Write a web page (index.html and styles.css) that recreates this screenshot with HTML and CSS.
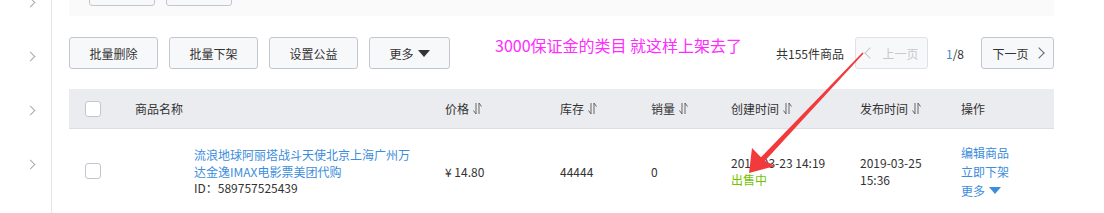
FILE: index.html
```html
<!DOCTYPE html>
<html lang="zh">
<head>
<meta charset="utf-8">
<link rel="stylesheet" href="styles.css">
</head>
<body>
<div class="page">
  <aside class="side">
    <span class="chev c0"></span>
    <span class="chev"></span>
    <span class="chev"></span>
    <span class="chev"></span>
  </aside>
  <main class="main">
    <div class="topbox">
      <span class="btn tb"></span>
      <span class="btn tb"></span>
    </div>
    <div class="toolbar">
      <div class="left">
        <span class="btn w89">批量删除</span>
        <span class="btn w89">批量下架</span>
        <span class="btn w89">设置公益</span>
        <span class="btn w80">更多 <i class="tri"></i></span>
        <span class="note">3000保证金的类目 就这样上架去了</span>
      </div>
      <div class="pager">
        <span class="total">共155件商品</span>
        <span class="btn pg disabled"><i class="lt"></i>上一页</span>
        <span class="pnum"><b>1</b>/8</span>
        <span class="btn pg">下一页<i class="gt"></i></span>
      </div>
    </div>
    <div class="table">
      <div class="row head">
        <div class="c cb"><span class="box"></span></div>
        <div class="c">商品名称</div>
        <div class="c">价格<svg class="sort" viewBox="0 0 9 13"><path d="M3 1V12L0.5 8.5M6 12V1L8.5 4.5" fill="none" stroke="#666" stroke-width="1"/></svg></div>
        <div class="c">库存<svg class="sort" viewBox="0 0 9 13"><path d="M3 1V12L0.5 8.5M6 12V1L8.5 4.5" fill="none" stroke="#666" stroke-width="1"/></svg></div>
        <div class="c">销量<svg class="sort" viewBox="0 0 9 13"><path d="M3 1V12L0.5 8.5M6 12V1L8.5 4.5" fill="none" stroke="#666" stroke-width="1"/></svg></div>
        <div class="c">创建时间<svg class="sort" viewBox="0 0 9 13"><path d="M3 1V12L0.5 8.5M6 12V1L8.5 4.5" fill="none" stroke="#666" stroke-width="1"/></svg></div>
        <div class="c">发布时间<svg class="sort" viewBox="0 0 9 13"><path d="M3 1V12L0.5 8.5M6 12V1L8.5 4.5" fill="none" stroke="#666" stroke-width="1"/></svg></div>
        <div class="c">操作</div>
      </div>
      <div class="row body">
        <div class="c cb"><span class="box"></span></div>
        <div class="c name">
          <span class="thumb"></span>
          <div class="info">
            <a class="link">流浪地球阿丽塔战斗天使北京上海广州万达金逸IMAX电影票美团代购</a>
            <div class="id">ID：589757525439</div>
          </div>
        </div>
        <div class="c">¥ 14.80</div>
        <div class="c">44444</div>
        <div class="c">0</div>
        <div class="c stack">
          <div>2019-03-23 14:19</div>
          <div class="green">出售中</div>
        </div>
        <div class="c stack">
          <div>2019-03-25</div>
          <div>15:36</div>
        </div>
        <div class="c stack ops">
          <a class="link">编辑商品</a>
          <a class="link">立即下架</a>
          <a class="link">更多 <i class="tri blue"></i></a>
        </div>
      </div>
    </div>
  </main>
</div>
<svg class="arrow" width="1104" height="213" viewBox="0 0 1104 213">
  <polygon points="862.4,52.4 863.6,53.6 765,160.8 775,166 749,173 752,148 761,157.2" fill="#f2393b"/>
</svg>
</body>
</html>
```
FILE: styles.css
```css
* { box-sizing: border-box; }
html, body { margin: 0; padding: 0; background: #fff; }
body {
  width: 1104px;
  height: 213px;
  overflow: hidden;
  position: relative;
  font-family: "Noto Sans CJK SC", "Liberation Sans", sans-serif;
  font-size: 12px;
  color: #333;
}
.page { display: flex; height: 213px; }
.side {
  width: 52px;
  flex: none;
  border-right: 1px solid #e6e6e6;
  display: flex;
  flex-direction: column;
  align-items: center;
  padding-left: 10px;
}
.chev {
  width: 7px;
  height: 7px;
  border-right: 1px solid #aaa;
  border-top: 1px solid #aaa;
  transform: rotate(45deg);
  margin-top: 47px;
}
.chev.c0 { margin-top: -1px; }
.main { width: 1002px; padding-left: 17px; }
.topbox {
  width: 985px;
  height: 16px;
  background: #fafafa;
  padding: 0 0 10px 20px;
  display: flex;
  align-items: flex-end;
  gap: 11px;
}
.btn {
  display: inline-flex;
  align-items: center;
  justify-content: center;
  height: 32px;
  flex: none;
  border: 1px solid #c4c6cf;
  border-radius: 3px;
  background: #f7f8fa;
  color: #333;
  font-size: 12px;
  white-space: nowrap;
}
.tb { width: 66px; }
.w89 { width: 89px; }
.w80 { width: 81px; }
.toolbar {
  width: 985px;
  margin-top: 21px;
  display: flex;
  justify-content: space-between;
  align-items: flex-start;
  height: 32px;
}
.left { display: flex; gap: 11px; align-items: flex-start; }
.tri {
  display: inline-block;
  width: 0; height: 0;
  border-left: 6px solid transparent;
  border-right: 6px solid transparent;
  border-top: 7px solid #333;
  margin-left: 4px;
}
.tri.blue { border-top-color: #3c8ddb; }
.note {
  color: #ff2bff;
  font-size: 16px;
  line-height: 20px;
  margin-left: 34px;
  margin-top: -2px;
}
.pager { display: flex; align-items: center; height: 32px; }
.total { margin-right: 11px; }
.pg { width: 73px; }
.pg.disabled { color: #c8c8c8; border-color: #e0e1e6; background: #f7f8fa; }
.lt, .gt {
  display: inline-block;
  width: 8px; height: 8px;
  border-left: 1px solid currentColor;
  border-bottom: 1px solid currentColor;
}
.lt { transform: rotate(45deg); margin-right: 8px; margin-left: 2px; }
.gt { transform: rotate(-135deg); margin-left: 6px; border-color: #666; }
.pnum { margin: 0 17px 0 18px; color: #333; }
.pnum b { font-weight: normal; color: #3c8ddb; }
.table { width: 985px; margin-top: 20px; }
.row {
  display: grid;
  grid-template-columns: 66px 310px 115px 91px 80px 129px 101px 93px;
  align-items: center;
}
.head {
  height: 40px;
  background: #ebecf0;
  border-bottom: 1px solid #dcdee3;
}
.body { height: 84px; }
.c { display: flex; align-items: center; white-space: nowrap; }
.cb { padding-left: 16px; }
.box {
  width: 16px; height: 16px;
  border: 1px solid #c4c6cf;
  border-radius: 3px;
  background: #fff;
}
.sort { width: 9px; height: 13px; margin-left: 4px; }
.thumb { width: 59px; flex: none; }
.info { white-space: normal; width: 222px; line-height: 17px; }
.link { color: #3c8ddb; text-decoration: none; display: block; }
.id { color: #333; line-height: 16px; }
.stack { flex-direction: column; align-items: flex-start; line-height: 17px; }
.green { color: #73c400; }
.ops { line-height: 19px; }
.ops .link { display: flex; align-items: center; }
.arrow { position: absolute; left: 0; top: 0; pointer-events: none; }
```
